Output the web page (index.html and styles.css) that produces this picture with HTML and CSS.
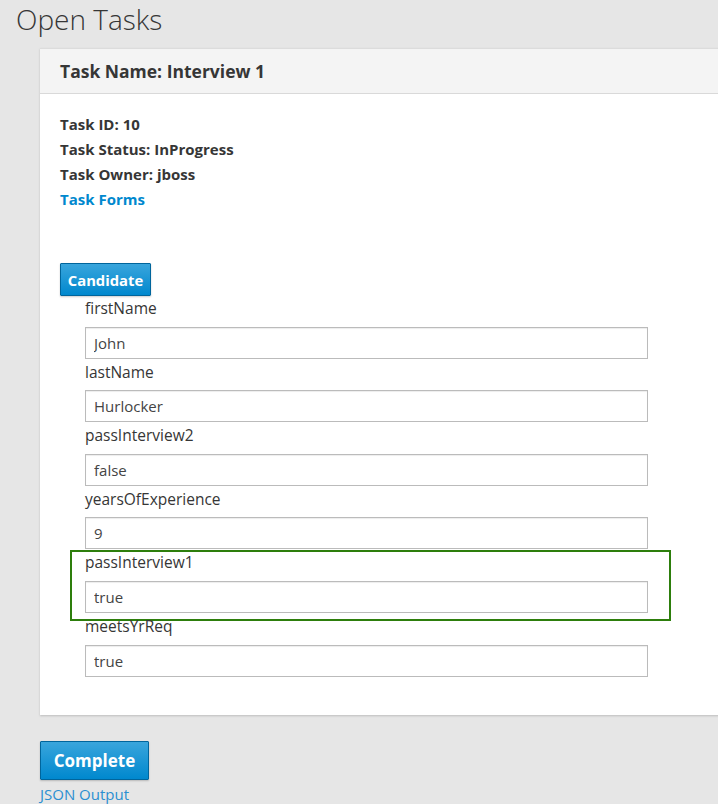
FILE: index.html
```html
<!DOCTYPE html>
<html>
<head>
<meta charset="utf-8">
<link rel="stylesheet" href="styles.css">
</head>
<body>
<h1 class="page-title">Open Tasks</h1>
<div class="card">
  <div class="card-heading">Task Name: Interview 1</div>
  <div class="card-body">
    <div class="meta">
      <div>Task ID: 10</div>
      <div>Task Status: InProgress</div>
      <div>Task Owner: jboss</div>
      <a class="meta-link" href="#">Task Forms</a>
    </div>
    <button class="btn btn-sm">Candidate</button>
    <div class="fields">
      <div class="field"><label>firstName</label><input class="input" value="John"></div>
      <div class="field"><label>lastName</label><input class="input" value="Hurlocker"></div>
      <div class="field"><label>passInterview2</label><input class="input" value="false"></div>
      <div class="field"><label>yearsOfExperience</label><input class="input" value="9"></div>
      <div class="field highlight"><label>passInterview1</label><input class="input" value="true"></div>
      <div class="field"><label>meetsYrReq</label><input class="input" value="true"></div>
    </div>
  </div>
</div>
<div class="actions">
  <button class="btn btn-lg">Complete</button>
  <a class="json-link" href="#">JSON Output</a>
</div>
</body>
</html>
```

FILE: styles.css
```css
html, body {
  margin: 0;
  padding: 0;
}
body {
  background: #e6e6e6;
  font-family: "Open Sans", "DejaVu Sans", sans-serif;
  color: #363636;
  overflow: hidden;
  height: 804px;
}
.page-title {
  margin: 0;
  padding-left: 16px;
  font-size: 28px;
  font-weight: 300;
  line-height: 38px;
  color: #363636;
  height: 38px;
}
.card {
  margin: 10px -30px 0 40px;
  background: #fff;
  box-shadow: 0 1px 2px rgba(3, 3, 3, 0.18);
  border-top: 1px solid #dcdcdc;
}
.card-heading {
  background: #f4f4f4;
  height: 44px;
  line-height: 44px;
  padding: 0 20px;
  font-size: 17.5px;
  font-weight: 700;
  color: #363636;
  border-bottom: 1px solid #d9d9d9;
}
.card-body {
  padding: 18px 20px 38px 20px;
}
.meta {
  font-size: 15px;
  font-weight: 700;
  line-height: 25px;
}
.meta-link {
  color: #0088ce;
  text-decoration: none;
  display: block;
}
.btn {
  display: block;
  font-family: "Open Sans", "DejaVu Sans", sans-serif;
  font-weight: 700;
  color: #fff;
  background: linear-gradient(#39a5dc, #0088ce);
  border: 1px solid #00659c;
  border-radius: 1px;
  box-shadow: 0 1px 2px rgba(0, 0, 0, 0.2);
  padding: 0;
  cursor: pointer;
}
.btn-sm {
  margin-top: 51px;
  width: 91px;
  height: 33px;
  font-size: 14.8px;
}
.fields {
  margin-top: -1px;
  padding-left: 25px;
  width: 563px;
}
.field {
  position: relative;
}
.field label {
  display: block;
  font-size: 15.5px;
  line-height: 21px;
  padding-top: 3px;
  margin-bottom: 7.6px;
  color: #363636;
}
.input {
  display: block;
  box-sizing: border-box;
  width: 563px;
  height: 32px;
  border: 1px solid #bbb;
  box-shadow: inset 0 1px 1px rgba(3, 3, 3, 0.075);
  padding: 0 8px;
  font-family: "Open Sans", "DejaVu Sans", sans-serif;
  font-size: 15px;
  color: #444;
  margin: 0;
  background: #fff;
}
.highlight::after {
  content: "";
  position: absolute;
  left: -15px;
  right: -23px;
  top: 1px;
  bottom: -8px;
  border: 2px solid #2d7e0c;
  pointer-events: none;
}
.actions {
  padding: 26px 0 0 40px;
}
.btn-lg {
  width: 109px;
  height: 39px;
  font-size: 17px;
}
.json-link {
  display: block;
  color: #2b8fd1;
  text-decoration: none;
  font-size: 15px;
  line-height: 28px;
}
```
